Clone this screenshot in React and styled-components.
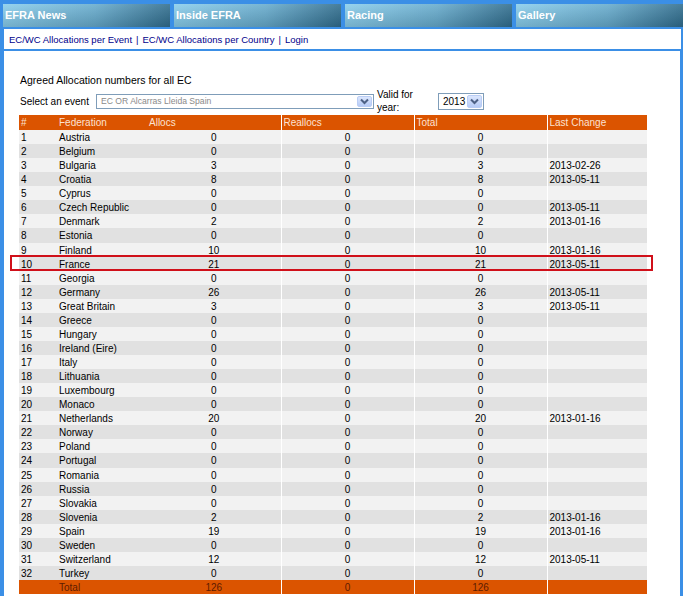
import React from 'react'
import styled, { createGlobalStyle } from 'styled-components'

const GlobalStyle = createGlobalStyle`
  html, body {
    margin: 0;
    padding: 0;
    background: #3b8fe6;
    font-family: "Liberation Sans", Arial, sans-serif;
  }
`

const rows = [
  [1, 'Austria', 0, 0, 0, ''],
  [2, 'Belgium', 0, 0, 0, ''],
  [3, 'Bulgaria', 3, 0, 3, '2013-02-26'],
  [4, 'Croatia', 8, 0, 8, '2013-05-11'],
  [5, 'Cyprus', 0, 0, 0, ''],
  [6, 'Czech Republic', 0, 0, 0, '2013-05-11'],
  [7, 'Denmark', 2, 0, 2, '2013-01-16'],
  [8, 'Estonia', 0, 0, 0, ''],
  [9, 'Finland', 10, 0, 10, '2013-01-16'],
  [10, 'France', 21, 0, 21, '2013-05-11'],
  [11, 'Georgia', 0, 0, 0, ''],
  [12, 'Germany', 26, 0, 26, '2013-05-11'],
  [13, 'Great Britain', 3, 0, 3, '2013-05-11'],
  [14, 'Greece', 0, 0, 0, ''],
  [15, 'Hungary', 0, 0, 0, ''],
  [16, 'Ireland (Eire)', 0, 0, 0, ''],
  [17, 'Italy', 0, 0, 0, ''],
  [18, 'Lithuania', 0, 0, 0, ''],
  [19, 'Luxembourg', 0, 0, 0, ''],
  [20, 'Monaco', 0, 0, 0, ''],
  [21, 'Netherlands', 20, 0, 20, '2013-01-16'],
  [22, 'Norway', 0, 0, 0, ''],
  [23, 'Poland', 0, 0, 0, ''],
  [24, 'Portugal', 0, 0, 0, ''],
  [25, 'Romania', 0, 0, 0, ''],
  [26, 'Russia', 0, 0, 0, ''],
  [27, 'Slovakia', 0, 0, 0, ''],
  [28, 'Slovenia', 2, 0, 2, '2013-01-16'],
  [29, 'Spain', 19, 0, 19, '2013-01-16'],
  [30, 'Sweden', 0, 0, 0, ''],
  [31, 'Switzerland', 12, 0, 12, '2013-05-11'],
  [32, 'Turkey', 0, 0, 0, ''],
]

const ROW_H = 14.06
const HIGHLIGHT = 10

const Arrow = () => (
  <svg width="9" height="7" viewBox="0 0 9 7">
    <path d="M1 1.5 L4.5 5 L8 1.5" fill="none" stroke="#4d6185" strokeWidth="2" />
  </svg>
)

const App = () => {
  return (
    <Page>
      <GlobalStyle />
      <TabBar>
        <Tab>EFRA News</Tab>
        <Tab>Inside EFRA</Tab>
        <Tab>Racing</Tab>
        <Tab>Gallery</Tab>
      </TabBar>
      <SubNav>
        <NavLink>EC/WC Allocations per Event</NavLink>
        <Sep>|</Sep>
        <NavLink>EC/WC Allocations per Country</NavLink>
        <Sep>|</Sep>
        <NavLink>Login</NavLink>
      </SubNav>
      <Content>
        <Title>Agreed Allocation numbers for all EC</Title>
        <FilterRow>
          <Label>Select an event</Label>
          <Select $width={278}>
            <SelectText $muted>EC OR Alcarras Lleida Spain</SelectText>
            <DropButton><Arrow /></DropButton>
          </Select>
          <YearLabel>Valid for<br />year:</YearLabel>
          <Select $width={46} $tall>
            <SelectText>2013</SelectText>
            <DropButton><Arrow /></DropButton>
          </Select>
        </FilterRow>
        <TableWrap>
          <Table>
            <colgroup>
              <col style={{ width: 38 }} />
              <col style={{ width: 90 }} />
              <col style={{ width: 134 }} />
              <col style={{ width: 133 }} />
              <col style={{ width: 133 }} />
              <col style={{ width: 100 }} />
            </colgroup>
            <thead>
              <tr>
                <Th>#</Th>
                <Th>Federation</Th>
                <Th>Allocs</Th>
                <Th $divider>Reallocs</Th>
                <Th $divider>Total</Th>
                <Th $divider>Last Change</Th>
              </tr>
            </thead>
            <tbody>
              {rows.map(([n, name, a, r, t, d]) => (
                <Row key={n} $odd={n % 2 === 1}>
                  <Td>{n}</Td>
                  <Td>{name}</Td>
                  <Td $center>{a}</Td>
                  <Td $center $divider>{r}</Td>
                  <Td $center $divider>{t}</Td>
                  <Td $divider>{d}</Td>
                </Row>
              ))}
              <TotalRow>
                <Td></Td>
                <Td>Total</Td>
                <Td $center>126</Td>
                <Td $center $divider>0</Td>
                <Td $center $divider>126</Td>
                <Td $divider></Td>
              </TotalRow>
            </tbody>
          </Table>
          <Highlight style={{ top: Math.round(ROW_H * HIGHLIGHT) - 1 }} />
        </TableWrap>
      </Content>
    </Page>
  )
}

// --- STYLED COMPONENTS ---

const Page = styled.div`
  width: 683px;
  height: 596px;
  overflow: hidden;
  background: #3b8fe6;
  padding-top: 4px;
  box-sizing: border-box;
`

const TabBar = styled.div`
  display: grid;
  grid-template-columns: repeat(4, 167px);
  column-gap: 4px;
  padding-left: 3px;
  height: 23px;
`

const Tab = styled.div`
  background:
    linear-gradient(to bottom, rgba(255, 255, 255, 0.12), rgba(0, 0, 0, 0.14)),
    linear-gradient(to right, #88cdec 0%, #66abcd 55%, #2f6d8e 100%);
  color: #fff;
  font-weight: bold;
  font-size: 11px;
  line-height: 22px;
  padding-left: 2px;
`

const SubNav = styled.div`
  margin: 2px 2px 0 4px;
  background: #fff;
  height: 20px;
  display: flex;
  align-items: center;
  padding-left: 5px;
  font-size: 9.5px;
  color: #00008b;
  border-bottom: 2px solid #3b8fe6;
`

const NavLink = styled.span`
  color: #00008b;
  cursor: pointer;
`

const Sep = styled.span`
  margin: 0 4px;
`

const Content = styled.div`
  margin: 0 3px 0 4px;
  background: #fff;
  height: 600px;
  padding: 23px 0 0 15px;
  box-sizing: border-box;
  font-size: 10px;
  color: #000;
`

const Title = styled.div`
  line-height: 13px;
  font-size: 10.5px;
  padding-left: 1px;
`

const FilterRow = styled.div`
  display: flex;
  align-items: center;
  height: 28px;
  padding-left: 1px;
`

const Label = styled.span`
  width: 76px;
`

const YearLabel = styled.span`
  line-height: 13px;
  margin-left: 3px;
  width: 61px;
`

const Select = styled.div`
  width: ${p => p.$width}px;
  height: ${p => (p.$tall ? 17 : 15)}px;
  box-sizing: border-box;
  border: 1px solid #7f9db9;
  background: #fff;
  display: flex;
  align-items: center;
  justify-content: space-between;
  padding: 1px;
`

const SelectText = styled.span`
  color: ${p => (p.$muted ? '#8a8a8a' : '#000')};
  font-size: ${p => (p.$muted ? '8.6px' : '10px')};
  padding-left: 3px;
  white-space: nowrap;
`

const DropButton = styled.span`
  width: 15px;
  height: 100%;
  box-sizing: border-box;
  border: 1px solid #bacdf5;
  border-radius: 2px;
  background: linear-gradient(to bottom, #dbe6fd, #b6cbf6);
  display: flex;
  align-items: center;
  justify-content: center;
`

const TableWrap = styled.div`
  position: relative;
  width: 628px;
`

const Table = styled.table`
  width: 628px;
  border-collapse: collapse;
  table-layout: fixed;
  font-size: 10px;
`

const Th = styled.th`
  background: #db5400;
  color: #fbe2d2;
  font-weight: normal;
  text-align: left;
  height: ${ROW_H}px;
  padding: 1px 2px 0;
  line-height: ${ROW_H - 1}px;
  border-left: ${p => (p.$divider ? '1px solid #fff' : 'none')};
`

const Row = styled.tr`
  background: ${p => (p.$odd ? '#f2f2f2' : '#e1e1e1')};
`

const TotalRow = styled.tr`
  background: #db5400;
  color: #5e1c00;
`

const Td = styled.td`
  height: ${ROW_H}px;
  line-height: ${ROW_H - 1}px;
  padding: 1px 2px 0;
  box-sizing: border-box;
  text-align: ${p => (p.$center ? 'center' : 'left')};
  border-left: ${p => (p.$divider ? '1px solid #fff' : 'none')};
  white-space: nowrap;
  overflow: hidden;
`

const Highlight = styled.div`
  position: absolute;
  left: -9px;
  right: -6px;
  height: 16px;
  border: 2px solid #d0101a;
  box-sizing: border-box;
  pointer-events: none;
`

export default App
